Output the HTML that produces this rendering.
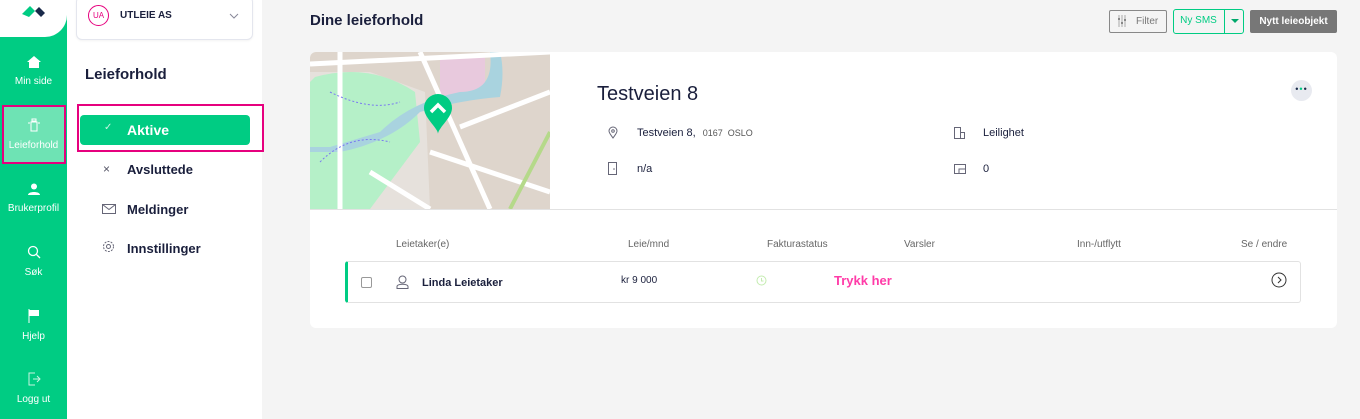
<!DOCTYPE html>
<html><head><meta charset="utf-8"><style>
*{box-sizing:border-box;margin:0;padding:0}
body{width:1360px;height:419px;overflow:hidden;background:#f4f4f4;font-family:"Liberation Sans",sans-serif;color:#1a1f3c;position:relative}
.abs{position:absolute}
.side{left:0;top:0;width:67px;height:419px;background:#00cc83}
.logo{left:0;top:0;width:67px;height:37px;background:#fff;border-bottom-right-radius:22px}
.nav{position:absolute;left:0;width:67px;text-align:center;color:#fff;font-size:10px}
.nav svg{display:block;margin:0 auto 8px}
.col2{left:67px;top:0;width:195px;height:419px;background:#fff}
.menu{position:absolute;left:103px;font-size:13px;font-weight:bold;color:#1a1f3c}
.card{left:310px;top:52px;width:1027px;height:276px;background:#fff;border-radius:6px;overflow:hidden}
.lbl{position:absolute;font-size:10px;color:#666}
</style></head><body>
<div class="abs side"></div>
<div class="abs logo"><svg class="abs" style="left:22px;top:4px" width="24" height="16" viewBox="0 0 24 16"><path d="M0 10 L8 2 L13 7 L7 13Z" fill="#00cc83"/><path d="M13 7 L17 3 L23 9 L19 13Z" fill="#1a2a4a"/></svg></div>
<div class="nav" style="top:56px"><svg width="14" height="12" viewBox="0 0 14 12"><path d="M7 0 L14 6 H12 V12 H2 V6 H0Z" fill="#fff"/></svg>Min side</div>
<div class="abs" style="left:2px;top:105px;width:64px;height:59px;background:#6ee3b4;border:2px solid #e6007e"></div>
<div class="nav" style="top:118px"><svg width="12" height="14" viewBox="0 0 12 14"><path d="M4 1h4v2H4zM3 4h6v9H3z" fill="none" stroke="#fff"/><path d="M0 5h2M10 5h2" stroke="#fff"/></svg>Leieforhold</div>
<div class="nav" style="top:183px"><svg width="12" height="12" viewBox="0 0 12 12"><circle cx="6" cy="3.5" r="3" fill="#fff"/><path d="M0 12c0-4 12-4 12 0z" fill="#fff"/></svg>Brukerprofil</div>
<div class="nav" style="top:245px"><svg width="14" height="14" viewBox="0 0 14 14"><circle cx="6" cy="6" r="4.5" fill="none" stroke="#fff" stroke-width="1.3"/><path d="M9.5 9.5L13 13" stroke="#fff" stroke-width="1.3"/></svg>Søk</div>
<div class="nav" style="top:309px"><svg width="12" height="14" viewBox="0 0 12 14"><path d="M1 0V14" stroke="#fff"/><path d="M1 1h10v6H1z" fill="#fff"/></svg>Hjelp</div>
<div class="nav" style="top:372px"><svg width="14" height="14" viewBox="0 0 14 14"><path d="M8 1H2V13H8M6 7H13M10 4l3 3-3 3" fill="none" stroke="#c8f5e2"/></svg>Logg ut</div>

<div class="abs col2"></div>
<div class="abs" style="left:76px;top:-4px;width:177px;height:44px;background:#fff;border:1px solid #e4e6ee;border-radius:6px;box-shadow:0 1px 2px rgba(0,0,0,.05)"></div>
<div class="abs" style="left:88px;top:5px;width:21px;height:21px;border:1px solid #e6007e;border-radius:50%;color:#e6007e;font-size:8px;text-align:center;line-height:19px">UA</div>
<div class="abs" style="left:120px;top:10px;font-size:10px;font-weight:bold">UTLEIE AS</div>
<svg class="abs" style="left:229px;top:13px" width="10" height="6"><path d="M1 1l4 4 4-4" fill="none" stroke="#889" /></svg>
<div class="abs" style="left:85px;top:66px;font-size:15px;font-weight:bold">Leieforhold</div>
<div class="abs" style="left:77px;top:104px;width:187px;height:48px;border:2px solid #e6007e"></div>
<div class="abs" style="left:80px;top:115px;width:170px;height:30px;background:#00cc83;border-radius:4px"></div>
<div class="abs" style="left:104px;top:122px;color:#c8f5e2;font-size:10px">✓</div>
<div class="menu" style="left:127px;top:122px;color:#fff;font-size:14px">Aktive</div>
<div class="abs" style="left:103px;top:162px;color:#556;font-size:12px">×</div>
<div class="menu" style="left:127px;top:162px">Avsluttede</div>
<svg class="abs" style="left:102px;top:204px" width="14" height="10"><rect x=".5" y=".5" width="13" height="9" fill="none" stroke="#667"/><path d="M.5 .5l6.5 5 6.5-5" fill="none" stroke="#667"/></svg>
<div class="menu" style="left:127px;top:202px">Meldinger</div>
<svg class="abs" style="left:102px;top:240px" width="13" height="13"><circle cx="6.5" cy="6.5" r="5" fill="none" stroke="#667" stroke-dasharray="2 1.2"/><circle cx="6.5" cy="6.5" r="2" fill="none" stroke="#667"/></svg>
<div class="menu" style="left:127px;top:241px">Innstillinger</div>

<div class="abs" style="left:310px;top:12px;font-size:15px;font-weight:bold">Dine leieforhold</div>
<div class="abs" style="left:1109px;top:10px;width:58px;height:23px;border:1px solid #888;border-radius:2px;font-size:10px;color:#777;line-height:21px;padding-left:26px">Filter</div>
<svg class="abs" style="left:1117px;top:15px" width="10" height="12"><path d="M2 0v12M5 0v12M8 0v12" stroke="#aaa"/><path d="M1 4h2M4 8h2M7 5h2" stroke="#888" stroke-width="2"/></svg>
<div class="abs" style="left:1173px;top:9px;width:71px;height:25px;border:1px solid #00cc83;border-radius:3px"></div>
<div class="abs" style="left:1173px;top:9px;width:52px;height:25px;border-right:1px solid #00cc83;font-size:10px;color:#00cc83;text-align:center;line-height:24px">Ny SMS</div>
<div class="abs" style="left:1231px;top:19px;border:4px solid transparent;border-top:4px solid #00a86b"></div>
<div class="abs" style="left:1250px;top:10px;width:87px;height:23px;background:#777;border-radius:2px;color:#fff;font-size:10px;font-weight:bold;text-align:center;line-height:23px">Nytt leieobjekt</div>

<div class="abs card">
<svg class="abs" style="left:0;top:0" width="240" height="157" viewBox="0 0 240 157">
<rect width="240" height="157" fill="#ded5cc"/>
<path d="M0 20 L60 20 L115 40 L120 157 L0 157Z" fill="#e6e1dc"/>
<path d="M5 25 Q60 10 105 40 L110 90 L60 157 L0 157 L0 30Z" fill="#b5f0c8"/>
<path d="M130 5 H175 V45 H130Z" fill="#e8c9dd"/>
<path d="M180 0 Q185 40 150 40 Q100 50 70 80 L20 95 L0 95 L0 100 L30 100 Q80 90 110 60 Q150 48 190 45 Q195 20 190 0Z" fill="#a9d3df"/>
<path d="M0 12 L240 0 M30 0 L30 157 M110 0 L180 157 M150 75 L240 40 M120 100 L240 140 M60 120 L120 157" stroke="#fff" stroke-width="5"/>
<path d="M200 157 L240 80" stroke="#b5d98a" stroke-width="4"/>
<path d="M20 40 Q60 60 90 50 M10 110 Q40 80 80 90" stroke="#7a7af0" stroke-width="1" stroke-dasharray="2 2" fill="none"/>
<path d="M128 42 a14 14 0 0 1 14 14 c0 10-14 20-14 26 c0-6-14-16-14-26 a14 14 0 0 1 14-14z" fill="#00cc83"/>
<path d="M121 60 l7-7 7 7" stroke="#fff" stroke-width="3.5" fill="none"/>
</svg>
<div class="abs" style="left:287px;top:31px;font-size:20px">Testveien 8</div>
<svg class="abs" style="left:298px;top:74px" width="10" height="13"><path d="M5 12C3 9 1 7 1 5a4 4 0 0 1 8 0c0 2-2 4-4 7z" fill="none" stroke="#667"/><circle cx="5" cy="5" r="1.3" fill="none" stroke="#667"/></svg>
<div class="abs" style="left:327px;top:75px;font-size:11px">Testveien 8, <span style="font-size:9px;color:#555;margin-left:4px">0167 &nbsp;OSLO</span></div>
<svg class="abs" style="left:298px;top:110px" width="9" height="13"><rect x=".5" y=".5" width="8" height="12" fill="none" stroke="#667"/><circle cx="6" cy="7" r=".8" fill="#667"/></svg>
<div class="abs" style="left:327px;top:111px;font-size:11px">n/a</div>
<svg class="abs" style="left:644px;top:75px" width="11" height="12"><rect x=".5" y=".5" width="6" height="11" fill="none" stroke="#667"/><rect x="6.5" y="5.5" width="4" height="6" fill="none" stroke="#667"/></svg>
<div class="abs" style="left:673px;top:75px;font-size:11px">Leilighet</div>
<svg class="abs" style="left:644px;top:112px" width="12" height="10"><rect x=".5" y=".5" width="11" height="9" fill="none" stroke="#667"/><path d="M5 9.5V5h6.5" fill="none" stroke="#667"/></svg>
<div class="abs" style="left:673px;top:111px;font-size:11px">0</div>
<div class="abs" style="left:981px;top:28px;width:21px;height:21px;border-radius:50%;background:#e8eaf0;text-align:center;line-height:19px;font-size:9px;letter-spacing:1px;color:#1a2a4a">•<span style="color:#00cc83">•</span>•</div>
<div class="abs" style="left:0;top:157px;width:1027px;height:1px;background:#e2e2e2"></div>
<div class="lbl" style="left:86px;top:187px">Leietaker(e)</div>
<div class="lbl" style="left:318px;top:187px">Leie/mnd</div>
<div class="lbl" style="left:457px;top:187px">Fakturastatus</div>
<div class="lbl" style="left:594px;top:187px">Varsler</div>
<div class="lbl" style="left:767px;top:187px">Inn-/utflytt</div>
<div class="lbl" style="left:931px;top:187px">Se / endre</div>
<div class="abs" style="left:35px;top:209px;width:956px;height:42px;border:1px solid #e2e2e2;border-left:3px solid #00cc83;border-radius:3px"></div>
<div class="abs" style="left:51px;top:225px;width:11px;height:11px;border:1px solid #999;border-radius:2px"></div>
<svg class="abs" style="left:86px;top:223px" width="13" height="14"><circle cx="6.5" cy="4.5" r="3.5" fill="none" stroke="#667"/><path d="M1 13.5v-2c0-3 11-3 11 0v2z" fill="none" stroke="#667"/></svg>
<div class="abs" style="left:112px;top:225px;font-size:11px;font-weight:bold">Linda Leietaker</div>
<div class="abs" style="left:311px;top:223px;font-size:10px">kr 9 000</div>
<svg class="abs" style="left:446px;top:223px" width="11" height="11"><circle cx="5.5" cy="5.5" r="4.5" fill="none" stroke="#c4ecb0"/><path d="M5.5 3v3h2" fill="none" stroke="#c4ecb0"/></svg>
<div class="abs" style="left:524px;top:221px;font-size:13px;font-weight:bold;color:#ff3ca8">Trykk her</div>
<svg class="abs" style="left:961px;top:220px" width="16" height="16"><circle cx="8" cy="8" r="7" fill="none" stroke="#333"/><path d="M7 5l3 3-3 3" fill="none" stroke="#333"/></svg>
</div>
</body></html>
